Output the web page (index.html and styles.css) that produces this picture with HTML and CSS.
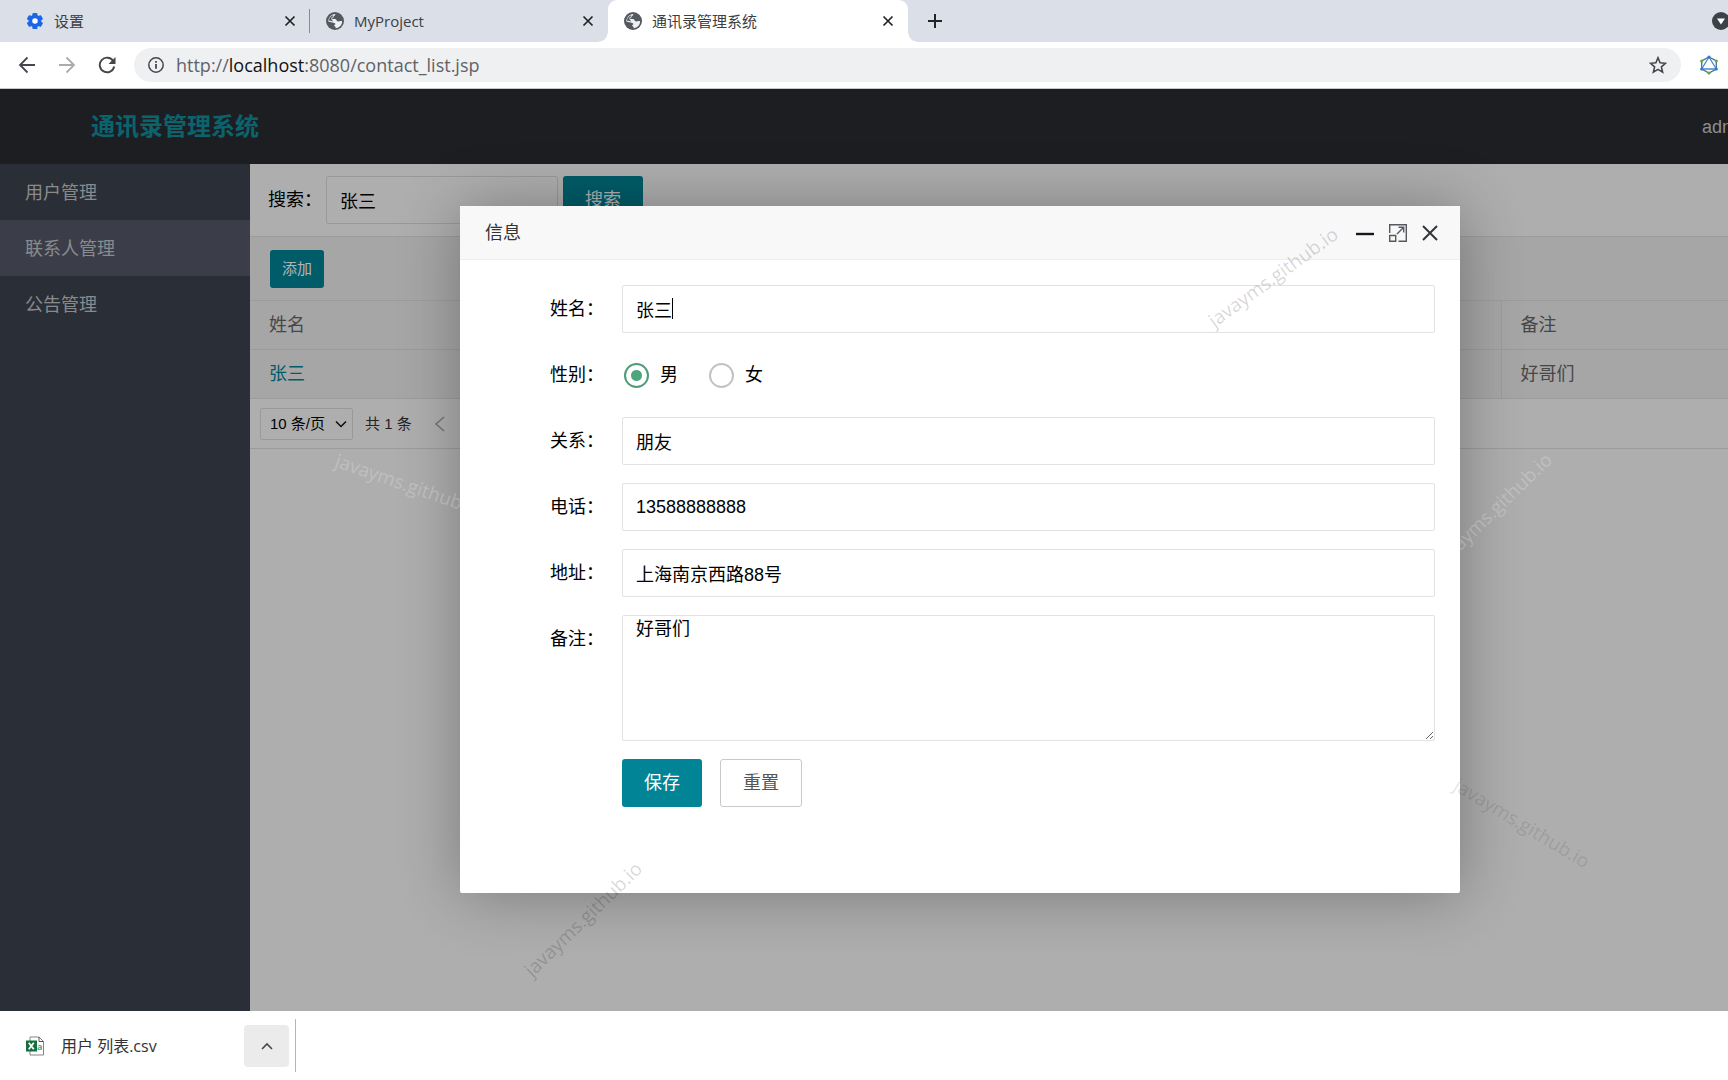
FILE: index.html
```html
<!DOCTYPE html>
<html lang="zh-CN">
<head>
<meta charset="utf-8">
<title>通讯录管理系统</title>
<link rel="stylesheet" href="styles.css">
</head>
<body>
<svg class="defs" aria-hidden="true">
  <symbol id="globe" viewBox="0 0 18 18">
    <circle cx="9" cy="9" r="9" fill="#54585f"/>
    <path d="M9.2 1.9c.5 1.1-.3 1.7-1.5 2.1.2 1.4-.7 1.9-2 2 .2 1.300 1.500.9 3.100 1 1.700.2 1.800 1.400 2.300 2.300.9.2 1.700.1 2.700 0 .7-.1 1.600-.3 2.300-.1.1 3.500-2.700 6.800-6.400 7 .2-1.500-.6-1.700-1.600-2.100 0-1 .5-1.600 1.500-1.900-.6-1.600-2.800-1.800-7.300-2.800.1-4 3-7.200 6.900-7.500z" fill="#eef0f4"/>
    <path d="M7.200 3.200c-2.400.8-4.100 2.800-4.300 5.300 1.500.2 3.200.5 4.500 1-.6-1-2-1.200-2.100-2.900-.1-1.200 1.100-1.500 1.600-2.100z" fill="#54585f"/>
  </symbol>
  <symbol id="cross" viewBox="0 0 12 12">
    <path d="M1.500 1.500l9 9M10.500 1.500l-9 9" fill="none" stroke="currentColor" stroke-width="1.700"/>
  </symbol>
</svg>

<div class="browser">
  <div class="tabs">
    <div class="tab tab-first">
      <svg class="ico18" viewBox="0 0 24 24"><path fill="#1a66e8" stroke="#1a66e8" stroke-width="1.500" d="M19.400 13c0-.3.1-.7.1-1s0-.7-.1-1l2.100-1.600c.2-.2.2-.4.1-.6l-2-3.500c-.1-.2-.4-.3-.6-.2l-2.500 1c-.5-.4-1.100-.7-1.700-1L14.400 2.400c0-.2-.2-.4-.5-.4h-4c-.2 0-.5.2-.5.4L9 5.100c-.6.2-1.200.6-1.700 1l-2.500-1c-.2-.1-.5 0-.6.2l-2 3.500c-.1.200-.1.500.1.600L4.400 11c0 .3-.1.700-.1 1s0 .7.1 1l-2.100 1.600c-.2.200-.2.400-.1.600l2 3.500c.1.200.4.300.6.200l2.500-1c.5.400 1.100.7 1.700 1l.4 2.700c0 .2.200.4.500.4h4c.2 0 .5-.2.5-.4l.4-2.700c.6-.2 1.200-.6 1.700-1l2.500 1c.2.1.5 0 .6-.2l2-3.500c.1-.2.1-.5-.1-.6z"/><circle cx="12" cy="12" r="3.700" fill="#fff"/></svg>
      <span class="tab-title">设置</span>
      <button class="plain" aria-label="关闭"><svg class="ico12"><use href="#cross"/></svg></button>
    </div>
    <div class="tab">
      <svg class="ico18"><use href="#globe"/></svg>
      <span class="tab-title">MyProject</span>
      <button class="plain" aria-label="关闭"><svg class="ico12"><use href="#cross"/></svg></button>
    </div>
    <div class="tab tab-active">
      <svg class="ico18"><use href="#globe"/></svg>
      <span class="tab-title">通讯录管理系统</span>
      <button class="plain" aria-label="关闭"><svg class="ico12"><use href="#cross"/></svg></button>
    </div>
    <button class="plain new-tab" aria-label="新标签页"><svg class="ico16" viewBox="0 0 16 16"><path d="M8 1v14M1 8h14" stroke="#202327" stroke-width="2"/></svg></button>
    <button class="plain tab-search" aria-label="搜索标签页"><svg class="ico18" viewBox="0 0 18 18"><circle cx="9" cy="9" r="9" fill="#3c4048"/><path d="M5 6.500h8l-4 6z" fill="#fff"/></svg></button>
  </div>
  <div class="toolbar">
    <div class="nav">
      <button class="plain" aria-label="后退"><svg class="ico18" viewBox="0 0 18 18"><path d="M17 9H2M9.500 1.500L2 9l7.500 7.500" fill="none" stroke="#44474c" stroke-width="1.800"/></svg></button>
      <button class="plain" aria-label="前进"><svg class="ico18" viewBox="0 0 18 18"><path d="M1 9h15M8.500 1.500L16 9l-7.500 7.500" fill="none" stroke="#a9abae" stroke-width="1.800"/></svg></button>
      <button class="plain" aria-label="刷新"><svg class="ico18" viewBox="0 0 18 18"><path d="M15.200 5A7.300 7.300 0 1 0 16.200 10.500" fill="none" stroke="#44474c" stroke-width="1.900"/><path d="M17.500 1v7h-7z" fill="#44474c"/></svg></button>
    </div>
    <div class="omnibox">
      <svg class="ico16" viewBox="0 0 16 16"><circle cx="8" cy="8" r="7.200" fill="none" stroke="#44474c" stroke-width="1.500"/><path d="M8 7v4.800M8 4v1.700" stroke="#44474c" stroke-width="1.800"/></svg>
      <span class="url">http://<span class="host">localhost</span>:8080/contact_list.jsp</span>
      <button class="plain" aria-label="收藏"><svg class="ico18" viewBox="0 0 18 18"><path d="M9 1.800l2.100 5 5.400.5-4.100 3.600 1.200 5.300L9 13.400l-4.600 2.800 1.200-5.300-4.100-3.600 5.400-.5z" fill="none" stroke="#44474c" stroke-width="1.600"/></svg></button>
    </div>
    <button class="plain extension" aria-label="扩展程序"><svg class="ico20" viewBox="0 0 20 20"><path d="M10 2l7.300 4v8L10 18l-7.300-4V6z" fill="none" stroke="#3a7890" stroke-width="1.300"/><path d="M10 2l7.300 12H2.700z" fill="none" stroke="#4a86d4" stroke-width="1.300"/><g fill="#3576cf"><circle cx="10" cy="2" r="1.600"/><circle cx="2.700" cy="14" r="1.600"/><circle cx="17.300" cy="14" r="1.600"/></g><g fill="#6ba33c"><circle cx="2.700" cy="6" r="1.600"/><circle cx="17.300" cy="6" r="1.600"/><circle cx="10" cy="18" r="1.600"/></g></svg></button>
  </div>
</div>

<div class="page">
  <header class="site-header">
    <h1 class="site-title">通讯录管理系统</h1>
    <span class="user">admin</span>
  </header>
  <div class="site-body">
    <nav class="sidebar">
      <a href="#users">用户管理</a>
      <a href="#contacts" class="current">联系人管理</a>
      <a href="#notices">公告管理</a>
    </nav>
    <main class="content">
      <form class="search">
        <label for="keyword">搜索：</label>
        <input class="field" id="keyword" type="text" value="张三">
        <button class="btn btn-primary" type="button">搜索</button>
      </form>
      <div class="table-tools"><button class="btn btn-primary btn-small" type="button">添加</button></div>
      <table class="grid">
        <thead><tr><th class="col-name">姓名</th><th class="col-mid"></th><th>备注</th></tr></thead>
        <tbody><tr><td><a href="#zhangsan">张三</a></td><td></td><td>好哥们</td></tr></tbody>
      </table>
      <div class="pager">
        <div class="select">
          <select aria-label="每页条数"><option>10 条/页</option></select>
          <svg class="ico12" viewBox="0 0 12 12"><path d="M1 3.500l5 5 5-5" fill="none" stroke="#111" stroke-width="1.500"/></svg>
        </div>
        <span>共 1 条</span>
        <button class="plain prev" aria-label="上一页" type="button"><svg class="ico16" viewBox="0 0 16 16"><path d="M12 1L4 8l8 7" fill="none" stroke="#a8a8a8" stroke-width="1.600"/></svg></button>
      </div>
    </main>
  </div>

  <div class="shade">
    <section class="dialog" role="dialog" aria-labelledby="dialog-title">
      <div class="dialog-head">
        <h2 id="dialog-title">信息</h2>
        <button class="plain" aria-label="最小化"><svg class="ico18" viewBox="0 0 18 18"><path d="M0 10h18" stroke="#15171f" stroke-width="2.400"/></svg></button>
        <button class="plain" aria-label="最大化"><svg class="ico18" viewBox="0 0 18 18"><g fill="none" stroke="#55585e" stroke-width="1.400"><path d="M.7 9V.7h16.600v16.600H9.500"/><path d="M.7 11.500h6v5.800h-6z"/><path d="M8 10l6.500-6.500M9.500 3.300h5.200v5.200"/></g></svg></button>
        <button class="plain" aria-label="关闭"><svg class="ico16" viewBox="0 0 16 16"><path d="M1 1l14 14M15 1L1 15" stroke="#33363c" stroke-width="2"/></svg></button>
      </div>
      <form class="form">
        <div class="row">
          <label for="name">姓名：</label>
          <div class="control"><input class="field" id="name" type="text" value="张三"><i class="caret"></i></div>
        </div>
        <div class="row">
          <span class="label">性别：</span>
          <div class="radios">
            <label><input type="radio" name="sex" checked>男</label>
            <label><input type="radio" name="sex">女</label>
          </div>
        </div>
        <div class="row">
          <label for="relation">关系：</label>
          <div class="control"><input class="field" id="relation" type="text" value="朋友"></div>
        </div>
        <div class="row">
          <label for="phone">电话：</label>
          <div class="control"><input class="field" id="phone" type="text" value="13588888888"></div>
        </div>
        <div class="row">
          <label for="address">地址：</label>
          <div class="control"><input class="field" id="address" type="text" value="上海南京西路88号"></div>
        </div>
        <div class="row">
          <label for="remark">备注：</label>
          <div class="control"><textarea class="field area" id="remark">好哥们</textarea></div>
        </div>
        <div class="row actions">
          <button class="btn btn-primary" type="button">保存</button>
          <button class="btn btn-plain" type="reset">重置</button>
        </div>
      </form>
    </section>
  </div>

  <span class="mark mark-a">javayms.github.io</span>
  <span class="mark mark-light mark-b">javayms.github.io</span>
  <span class="mark mark-light mark-c">javayms.github.io</span>
  <span class="mark mark-d">javayms.github.io</span>
  <span class="mark mark-e">javayms.github.io</span>
</div>

<footer class="downloads">
  <svg class="ico20" viewBox="0 0 20 20"><path d="M5 1h9l4.500 4.500V19H5z" fill="#fff" stroke="#858585"/><path d="M14 1v4.500h4.500" fill="none" stroke="#555"/><text x="12" y="14" class="csv-mark">a</text><path d="M1 4.500h11v11H1z" fill="#12703f"/><path d="M3.800 6.800l5 6.500M8.800 6.800l-5 6.500" stroke="#fff" stroke-width="1.800"/></svg>
  <span class="file-name">用户 列表.csv</span>
  <button class="more" aria-label="更多"><svg class="ico12" viewBox="0 0 12 12"><path d="M1 9l5-5 5 5" fill="none" stroke="#44474c" stroke-width="1.600"/></svg></button>
</footer>
</body>
</html>
```

FILE: styles.css
```css
* { box-sizing: border-box; }

body {
  margin: 0;
  min-height: 100vh;
  display: flex;
  flex-direction: column;
  overflow-x: hidden;
  background: #fff;
  color: #000;
  font: 18px/24px "Liberation Sans", "Noto Sans CJK SC", sans-serif;
}

button, input, select, textarea { font: inherit; color: inherit; margin: 0; }
svg { display: block; flex: none; }
.defs { position: absolute; width: 0; height: 0; }
.ico12 { width: 12px; height: 12px; }
.ico16 { width: 16px; height: 16px; }
.ico18 { width: 18px; height: 18px; }
.ico20 { width: 20px; height: 20px; }
.plain { padding: 0; border: 0; background: none; color: #202327; flex: none; }

/* Browser frame */
.browser, .downloads { font-family: "Open Sans", "Noto Sans CJK SC", sans-serif; }
.tabs {
  display: flex;
  align-items: stretch;
  height: 42px;
  overflow: hidden;
  background: #dadfe8;
  font-size: 15px;
}
.tab {
  flex: 0 0 298px;
  display: flex;
  align-items: center;
  gap: 10px;
  padding: 0 14px 0 16px;
  color: #3c4043;
}
.tab-first {
  flex-basis: 310px;
  padding-left: 26px;
  background: linear-gradient(#868b94, #868b94) no-repeat right center / 1px 24px;
}
.tab-title { flex: 1; }
.tab-active {
  position: relative;
  flex-basis: 300px;
  background: #fff;
  border-radius: 9px 9px 0 0;
}
/* Curved feet of the selected tab */
.tab-active::before, .tab-active::after {
  content: "";
  position: absolute;
  bottom: 0;
  width: 9px;
  height: 9px;
}
.tab-active::before { right: 100%; background: radial-gradient(circle at 0 0, transparent 8px, #fff 9px); }
.tab-active::after { left: 100%; background: radial-gradient(circle at 100% 0, transparent 8px, #fff 9px); }
.new-tab { margin-left: 19px; }
.tab-search { margin-left: auto; margin-right: -2px; }

.toolbar {
  display: flex;
  align-items: center;
  height: 47px;
  border-bottom: 1px solid #c8c9cb;
  background: #fff;
}
.nav { display: flex; gap: 22px; padding: 0 18px; }
.omnibox {
  flex: 1;
  display: flex;
  align-items: center;
  gap: 12px;
  height: 34px;
  padding: 0 14px;
  border-radius: 17px;
  background: #eff0f2;
  color: #5f6368;
}
.url { flex: 1; }
.host { color: #111; }
.extension { margin: 0 9px 0 18px; }

/* Site */
.page {
  position: relative;
  flex: 1;
  display: flex;
  flex-direction: column;
  overflow: hidden;
}
.site-header {
  flex: none;
  display: flex;
  align-items: center;
  justify-content: space-between;
  height: 75px;
  padding-left: 91px;
  background: #292c32;
}
.site-title { margin: 0; font-size: 24px; font-weight: 700; color: #108f9d; }
.user { flex: 0 0 26px; overflow: hidden; color: #c8c9cc; }
.site-body { flex: 1; display: flex; }
.sidebar { flex: 0 0 250px; background: #3d434e; }
.sidebar a {
  display: block;
  padding: 17px 25px 15px;
  color: #c5c6ca;
  text-decoration: none;
}
.sidebar .current { background: #555a69; }

.content { flex: 1; background: #fafafa; }
.search { display: flex; padding: 12px 0 12px 18px; }
.search label { line-height: 48px; }
.search .field { width: 232px; margin: 0 5px 0 4px; }
.field {
  display: block;
  width: 100%;
  height: 48px;
  padding: 0 13px;
  border: 1px solid #e2e2e2;
  border-radius: 2px;
  background: #fff;
  outline: 0;
}
.search .field { background: transparent; border-color: #dcdcdc; }
.btn {
  height: 48px;
  padding: 0 21px;
  border: 1px solid transparent;
  border-radius: 3px;
}
.btn-primary { background: #008496; color: #fff; }
.btn-plain { padding: 0 22px; border-color: #c9c9c9; background: #fff; color: #555; }
.btn-small { height: 38px; padding: 0 11px; font-size: 15px; }

.table-tools {
  padding: 13px 20px 12px;
  border-top: 1px solid #dedede;
  background: #eee;
}
.grid {
  width: 100%;
  table-layout: fixed;
  border-collapse: collapse;
  background: #eee;
  color: #666;
}
.grid th, .grid td {
  height: 49px;
  padding: 0 19px;
  border: 1px solid #dedede;
  border-left: 0;
  font-weight: 400;
  text-align: left;
}
.grid th:last-child, .grid td:last-child { border-right: 0; }
.grid a { color: #008496; text-decoration: none; }
.col-name { width: 251px; }
.col-mid { width: 1000px; }

.pager {
  display: flex;
  align-items: center;
  gap: 12px;
  height: 50px;
  padding-left: 10px;
  border-bottom: 1px solid #dedede;
  color: #333;
  font-size: 15px;
}
.select {
  display: grid;
  grid-template-columns: 1fr 18px;
  align-items: center;
  width: 93px;
}
.select select {
  grid-area: 1 / 1 / 2 / 3;
  height: 32px;
  padding: 0 9px;
  border: 1px solid #dcdcdc;
  border-radius: 2px;
  background: transparent;
  appearance: none;
  color: #000;
}
.select svg { grid-area: 1 / 2; pointer-events: none; }
.prev { margin-left: 8px; }

/* Dialog */
.shade {
  position: absolute;
  inset: 0;
  display: flex;
  padding: 117px 268px 118px 460px;
  background: rgba(0, 0, 0, .3);
}
.dialog {
  flex: 1;
  border-radius: 2px;
  background: #fff;
  box-shadow: 1px 1px 62px rgba(0, 0, 0, .3);
}
.dialog-head {
  display: flex;
  align-items: center;
  gap: 15px;
  height: 54px;
  padding: 0 22px 0 25px;
  border-bottom: 1px solid #eee;
  background: #f8f8f8;
}
.dialog-head h2 { flex: 1; margin: 0; font-size: 18px; font-weight: 400; color: #333; }
.form {
  display: flex;
  flex-direction: column;
  gap: 18px;
  padding: 25px;
}
.row { display: flex; }
.row > label, .label {
  flex: 0 0 137px;
  padding-right: 18px;
  line-height: 48px;
  text-align: right;
}
.control { position: relative; flex: 1; }
.caret {
  position: absolute;
  top: 13px;
  left: 50px;
  width: 1px;
  height: 21px;
  background: #000;
}
.area { height: 126px; padding: 1px 13px; resize: vertical; }
.radios { display: flex; gap: 31px; padding-left: 2px; }
.radios label { display: flex; align-items: center; gap: 11px; height: 48px; }
.radios input {
  appearance: none;
  width: 25px;
  height: 25px;
  border: 2px solid #c2c2c2;
  border-radius: 50%;
}
.radios input:checked {
  border-color: #4c9c78;
  background: radial-gradient(circle, #4ea67d 5px, transparent 6px);
}
.actions { gap: 18px; padding-left: 137px; }

/* Repeated site mark */
.mark {
  position: absolute;
  color: rgba(0, 0, 0, .17);
  font: 19px/24px "Open Sans", sans-serif;
  white-space: nowrap;
  pointer-events: none;
}
.mark-light { color: rgba(255, 255, 255, .22); }
.mark-a { left: 1273px; top: 188px; transform: translate(-50%, -50%) rotate(-36deg); }
.mark-b { left: 1493px; top: 421px; transform: translate(-50%, -50%) rotate(-44deg); }
.mark-c { left: 409px; top: 396px; transform: translate(-50%, -50%) rotate(19deg); }
.mark-d { left: 583px; top: 830px; transform: translate(-50%, -50%) rotate(-44deg); }
.mark-e { left: 1522px; top: 734px; transform: translate(-50%, -50%) rotate(31deg); color: rgba(0, 0, 0, .11); }

/* Downloads bar */
.downloads {
  display: flex;
  align-items: center;
  height: 69px;
  padding-left: 25px;
  background: #fff;
  color: #333;
  font-size: 16px;
}
.csv-mark { font: 700 9px "Open Sans", sans-serif; fill: #3fae86; }
.file-name { flex: 0 0 183px; padding-left: 16px; }
.more {
  display: grid;
  place-items: center;
  width: 45px;
  height: 42px;
  margin-left: 16px;
  border: 0;
  border-radius: 4px;
  background: #ebebeb;
}
.downloads::after {
  content: "";
  width: 1px;
  height: 53px;
  margin-left: 6px;
  background: #b5b5b5;
}
```
